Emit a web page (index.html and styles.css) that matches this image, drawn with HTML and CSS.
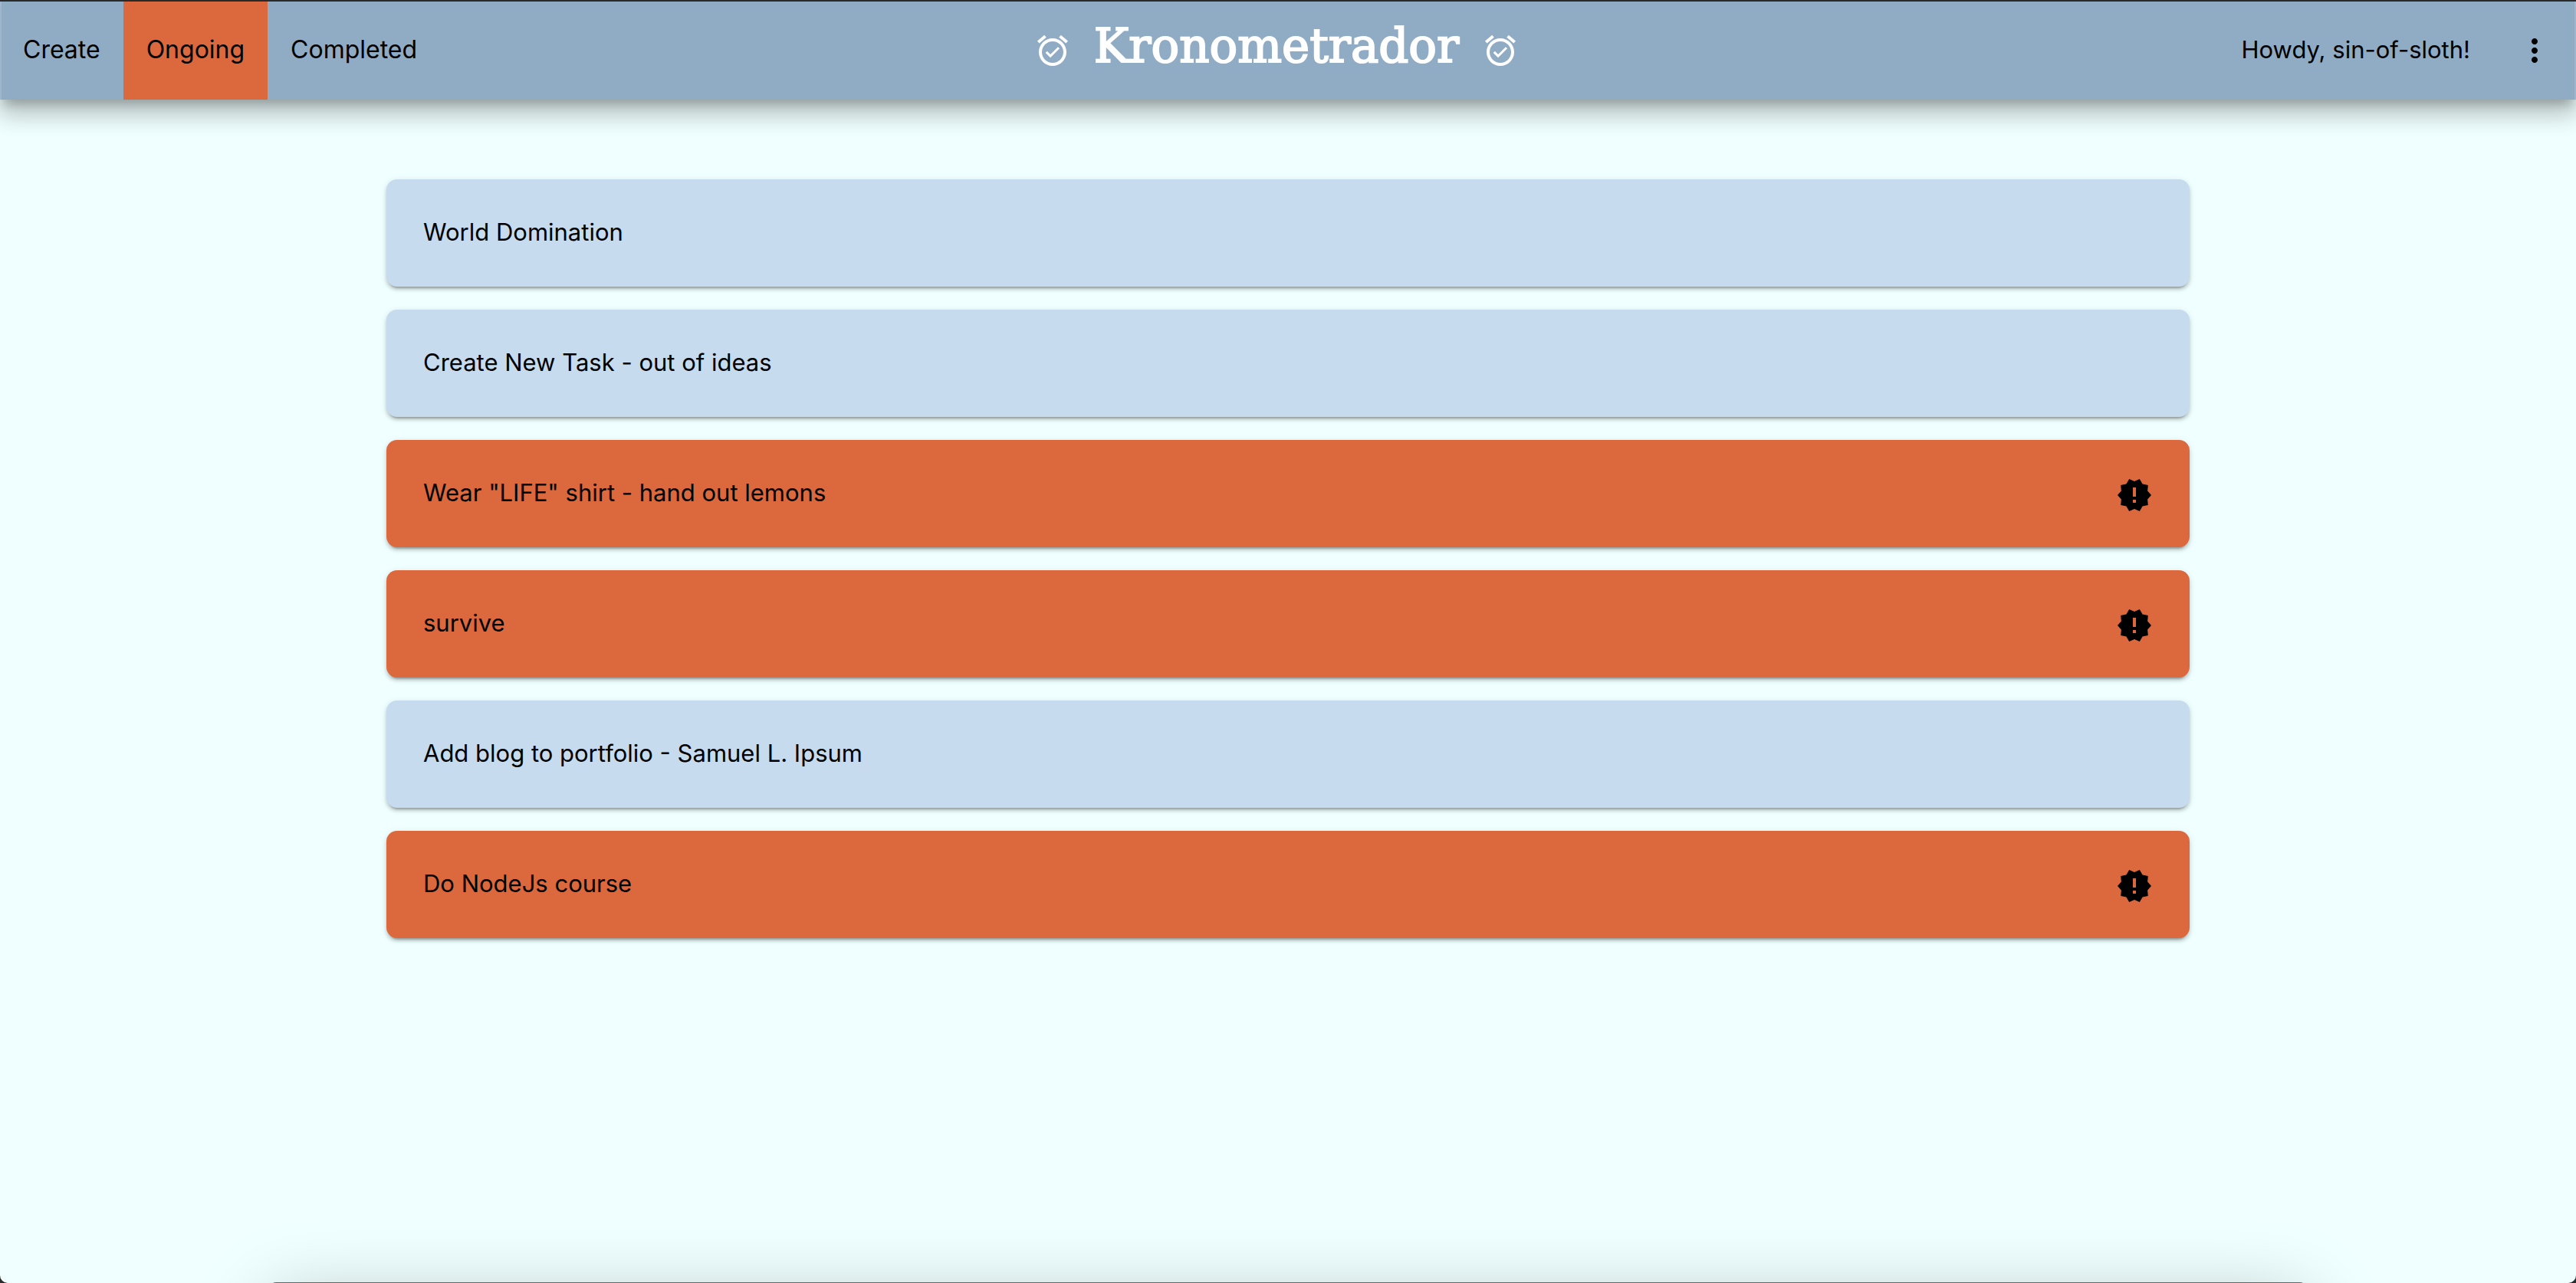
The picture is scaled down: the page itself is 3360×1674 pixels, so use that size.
FILE: index.html
```html
<!DOCTYPE html>
<html lang="en">
<head>
<meta charset="utf-8">
<title>Kronometrador</title>
<link rel="stylesheet" href="styles.css">
</head>
<body>
<svg class="sprite" aria-hidden="true">
  <symbol id="alarm" viewBox="0 0 24 24"><path d="M22 5.72l-4.6-3.86-1.29 1.53 4.6 3.86L22 5.72zM7.88 3.39L6.6 1.86 2 5.71l1.29 1.53 4.59-3.85zM12 4c-4.97 0-9 4.03-9 9s4.02 9 9 9c4.97 0 9-4.03 9-9s-4.03-9-9-9zm0 16c-3.87 0-7-3.13-7-7s3.13-7 7-7 7 3.13 7 7-3.13 7-7 7zm-1.46-5.47L8.41 12.4l-1.06 1.06 3.18 3.18 6-6-1.06-1.06-4.93 4.95z"/></symbol>
  <symbol id="more" viewBox="0 0 24 24"><path d="M12 8c1.1 0 2-.9 2-2s-.9-2-2-2-2 .9-2 2 .9 2 2 2zm0 2c-1.1 0-2 .9-2 2s.9 2 2 2 2-.9 2-2-.9-2-2-2zm0 6c-1.1 0-2 .9-2 2s.9 2 2 2 2-.9 2-2-.9-2-2-2z"/></symbol>
  <symbol id="urgent" viewBox="0 0 24 24"><path d="M23 12l-2.44-2.78.34-3.68-3.61-.82-1.89-3.18L12 3 8.6 1.54 6.71 4.72l-3.61.81.34 3.68L1 12l2.44 2.78-.34 3.69 3.61.82 1.89 3.18L12 21l3.4 1.46 1.89-3.18 3.61-.82-.34-3.68L23 12zm-10 5h-2v-2h2v2zm0-4h-2V7h2v6z"/></symbol>
</svg>
<div class="page">
  <header class="bar">
    <nav class="tabs">
      <a class="tab" href="#create">Create</a>
      <a class="tab tab-active" href="#ongoing" aria-current="page">Ongoing</a>
      <a class="tab" href="#completed">Completed</a>
    </nav>
    <div class="brand">
      <svg class="icon" aria-hidden="true"><use href="#alarm"/></svg>
      <h1 class="title">Kronometrador</h1>
      <svg class="icon" aria-hidden="true"><use href="#alarm"/></svg>
    </div>
    <div class="account">
      <span class="greeting">Howdy, sin-of-sloth!</span>
      <button class="menu" type="button" aria-label="Menu"><svg class="icon" aria-hidden="true"><use href="#more"/></svg></button>
    </div>
  </header>
  <main class="content">
    <ul class="tasks">
      <li class="task"><span class="name">World Domination</span></li>
      <li class="task"><span class="name">Create New Task - out of ideas</span></li>
      <li class="task task-urgent"><span class="name">Wear "LIFE" shirt - hand out lemons</span><svg class="icon" role="img" aria-label="Urgent"><use href="#urgent"/></svg></li>
      <li class="task task-urgent"><span class="name">survive</span><svg class="icon" role="img" aria-label="Urgent"><use href="#urgent"/></svg></li>
      <li class="task"><span class="name">Add blog to portfolio - Samuel L. Ipsum</span></li>
      <li class="task task-urgent"><span class="name">Do NodeJs course</span><svg class="icon" role="img" aria-label="Urgent"><use href="#urgent"/></svg></li>
    </ul>
  </main>
  <div class="sheet"></div>
</div>
</body>
</html>
```
FILE: styles.css
```css
* {
  box-sizing: border-box;
}

html {
  background: #2a2a2a;
}

body {
  margin: 0;
  color: #000;
  font-family: Inter, "Open Sans", sans-serif;
  font-size: 31px;
  line-height: 40px;
}

.sprite {
  display: none;
}

.page {
  position: relative;
  min-height: 100vh;
  overflow: hidden;
  border-top: 2px solid #2a2a2a;
  border-radius: 0 0 10px 10px;
  background: #f0ffff;
}

.bar {
  display: grid;
  grid-template-columns: 1fr auto 1fr;
  min-height: 128px;
  border: solid #a0b6cc;
  border-width: 0 2px;
  background: #90abc4;
  box-shadow: 0 12px 12px -6px rgba(0, 0, 0, 0.2), 0 20px 28px 2px rgba(0, 0, 0, 0.14), 0 8px 36px 6px rgba(0, 0, 0, 0.12);
}

.tabs {
  display: flex;
  font-size: 32px;
}

.tab {
  display: flex;
  align-items: center;
  padding: 0 30px 2px;
  color: inherit;
  text-decoration: none;
}

.tab:first-child {
  padding-left: 28px;
}

.tab-active {
  background: #db693d;
}

.brand {
  display: flex;
  align-items: center;
  gap: 30px;
  padding-right: 30px;
  color: #fff;
}

.title {
  margin: 0;
  padding-bottom: 12px;
  font-family: "DejaVu Serif", serif;
  font-size: 61px;
  font-weight: 400;
  line-height: 72px;
  -webkit-text-stroke: 2px #fff;
}

.icon {
  flex: none;
  width: 48px;
  height: 48px;
  fill: currentColor;
}

.account {
  display: flex;
  align-items: center;
  justify-content: flex-end;
  gap: 60px;
  padding-right: 28px;
}

.greeting {
  padding-bottom: 2px;
}

.menu {
  display: flex;
  padding: 0;
  border: 0;
  background: none;
  color: inherit;
}

.content {
  width: 70%;
  margin: 0 auto;
  padding: 104px 0;
}

.tasks {
  display: flex;
  flex-direction: column;
  gap: 30px;
  margin: 0;
  padding: 0;
  list-style: none;
}

.task {
  display: flex;
  align-items: center;
  justify-content: space-between;
  min-height: 140px;
  padding: 4px 48px 0;
  border-radius: 14px;
  background: #c7dbef;
  box-shadow: 0 6px 2px -4px rgba(0, 0, 0, 0.2), 0 4px 4px rgba(0, 0, 0, 0.14), 0 2px 10px rgba(0, 0, 0, 0.12);
}

.task-urgent {
  background: #db693d;
}

.name {
  padding-bottom: 6px;
}

.sheet {
  position: absolute;
  right: 352px;
  bottom: -199px;
  left: 352px;
  height: 200px;
  border-radius: 8px;
  background: #666;
  box-shadow: 0 24px 100px rgba(0, 0, 0, 0.25);
}
```
